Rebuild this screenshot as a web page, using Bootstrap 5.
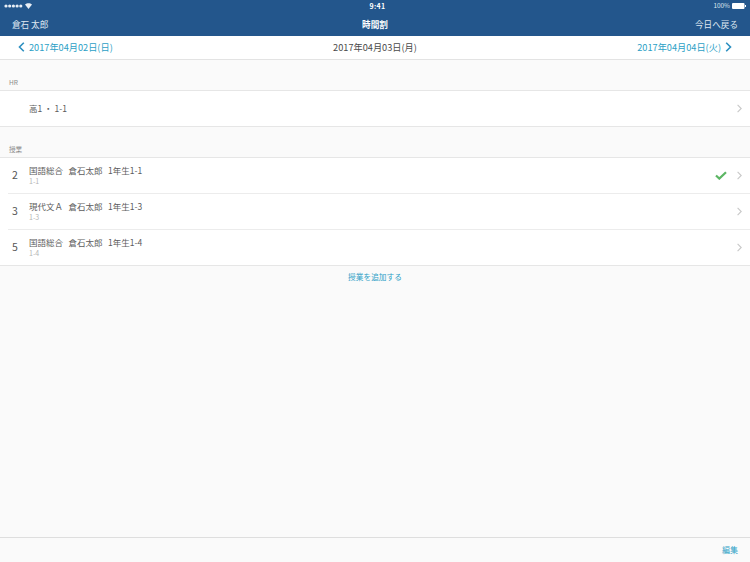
<!DOCTYPE html>
<html lang="ja">
<head>
<meta charset="utf-8">
<title>時間割</title>
<link href="https://cdn.jsdelivr.net/npm/bootstrap@5.3.0/dist/css/bootstrap.min.css" rel="stylesheet">
<style>
html,body{height:562px;overflow:hidden}
body{background:#fafafa;font-family:"Noto Sans CJK JP","Noto Sans",sans-serif;color:#4a4a4a}
.app{width:750px;height:562px}
.topbar{height:36px;background:#23568c;color:#fff}
.status{height:12px;font-size:6.4px;line-height:12px;padding:0 4px}
.status>div{flex:1 1 0}
.gap2px{gap:2px}
.clock{font-size:7px;font-weight:700;letter-spacing:.3px;padding-left:5px}
.titlerow{height:24px;font-size:8.6px;line-height:22px;padding:0 12px}
.titlerow>div{flex:1 1 0}
.ttl{font-weight:700}
.light{color:#dfe7f0}
.datebar{height:24px;background:#fff;border-bottom:1px solid #e3e3e3;font-size:9.2px;padding:0 18px}
.datebar>div{flex:1 1 0}
.teal{color:#2c9fc6}
.sect{height:30px;font-size:6.6px;color:#8a8a8a;padding:17px 0 0 9px;line-height:10px}
.rows{background:#fff;border-top:1px solid #e6e6e6;border-bottom:1px solid #e6e6e6}
.lesson{height:36px;margin-left:8px;padding-right:8px;border-bottom:1px solid #ececec}
.lesson:last-child{border-bottom:0;height:35px}
.num{width:21px;padding:0 0 1px 4px;font-size:10.5px;color:#555}
.subj{font-size:8.5px;line-height:13px;color:#5c5c5c}
.cls{font-size:7px;line-height:9px;color:#b5b5b5}
.subj span{margin-right:5.5px}
.lines{padding-bottom:2px}
.tick{margin-right:10px}
.addlink{font-size:7.7px;line-height:12px;padding-top:5px}
.bottombar{height:25px;border-top:1px solid #dedede;font-size:8px;padding:0 12px}
.grow{flex:1 1 auto}
</style>
</head>
<body>
<div class="app d-flex flex-column">
  <div class="topbar">
    <div class="status d-flex align-items-center">
      <div class="d-flex align-items-center gap2px">
        <svg width="19" height="4" viewBox="0 0 19 4" fill="#e8eef5"><circle cx="2" cy="2" r="1.6"/><circle cx="5.7" cy="2" r="1.6"/><circle cx="9.4" cy="2" r="1.6"/><circle cx="13.1" cy="2" r="1.6"/><circle cx="16.8" cy="2" r="1.6"/></svg>
        <svg width="7" height="6" viewBox="0 0 7 6"><path d="M0 1.6C2 -.3 5-.3 7 1.6L3.5 6Z" fill="#e8eef5"/></svg>
      </div>
      <div class="text-center clock">9:41</div>
      <div class="d-flex align-items-center justify-content-end light gap2px">100%
        <svg width="14" height="6" viewBox="0 0 14 6" fill="#fff"><rect x="0" y="0" width="12.500" height="6" rx="1"/><rect x="13" y="2" width="1" height="2"/></svg>
      </div>
    </div>
    <div class="titlerow d-flex align-items-center">
      <div class="light">倉石 太郎</div>
      <div class="text-center ttl">時間割</div>
      <div class="text-end light">今日へ戻る</div>
    </div>
  </div>

  <div class="datebar d-flex align-items-center">
    <div class="teal d-flex align-items-center gap-1">
      <svg width="7" height="10" viewBox="0 0 7 10" fill="none" stroke="#2c8fc0" stroke-width="1.600"><path d="M5.800.8 1.500 5l4.300 4.200"/></svg>
      2017年04月02日(日)
    </div>
    <div class="text-center">2017年04月03日(月)</div>
    <div class="teal d-flex align-items-center justify-content-end gap-1">
      2017年04月04日(火)
      <svg width="7" height="10" viewBox="0 0 7 10" fill="none" stroke="#2c8fc0" stroke-width="1.600"><path d="M1.200.8 5.500 5 1.200 9.200"/></svg>
    </div>
  </div>

  <div class="sect">HR</div>
  <div class="rows">
    <div class="lesson d-flex align-items-center">
      <div class="num"></div>
      <div class="subj grow">高1 ・ 1-1</div>
      <svg width="5" height="9" viewBox="0 0 5 9" fill="none" stroke="#c8c8c8" stroke-width="1.100"><path d="M.6.8 4.200 4.500.6 8.200"/></svg>
    </div>
  </div>

  <div class="sect">授業</div>
  <div class="rows">
    <div class="lesson d-flex align-items-center">
      <div class="num">2</div>
      <div class="grow lines">
        <div class="subj"><span>国語総合</span><span>倉石太郎</span>1年生1-1</div>
        <div class="cls">1-1</div>
      </div>
      <svg class="tick" width="12" height="9" viewBox="0 0 12 9" fill="none" stroke="#5cb664" stroke-width="2.200"><path d="M1 4.500 4.300 7.600 11 1.200"/></svg>
      <svg width="5" height="9" viewBox="0 0 5 9" fill="none" stroke="#c8c8c8" stroke-width="1.100"><path d="M.6.8 4.200 4.500.6 8.200"/></svg>
    </div>
    <div class="lesson d-flex align-items-center">
      <div class="num">3</div>
      <div class="grow lines">
        <div class="subj"><span>現代文Ａ</span><span>倉石太郎</span>1年生1-3</div>
        <div class="cls">1-3</div>
      </div>
      <svg width="5" height="9" viewBox="0 0 5 9" fill="none" stroke="#c8c8c8" stroke-width="1.100"><path d="M.6.8 4.200 4.500.6 8.200"/></svg>
    </div>
    <div class="lesson d-flex align-items-center">
      <div class="num">5</div>
      <div class="grow lines">
        <div class="subj"><span>国語総合</span><span>倉石太郎</span>1年生1-4</div>
        <div class="cls">1-4</div>
      </div>
      <svg width="5" height="9" viewBox="0 0 5 9" fill="none" stroke="#c8c8c8" stroke-width="1.100"><path d="M.6.8 4.200 4.500.6 8.200"/></svg>
    </div>
  </div>

  <div class="addlink teal text-center grow">授業を追加する</div>
  <div class="bottombar d-flex align-items-center justify-content-end teal">編集</div>
</div>
<script src="https://cdn.jsdelivr.net/npm/bootstrap@5.3.0/dist/js/bootstrap.bundle.min.js"></script>
</body>
</html>
